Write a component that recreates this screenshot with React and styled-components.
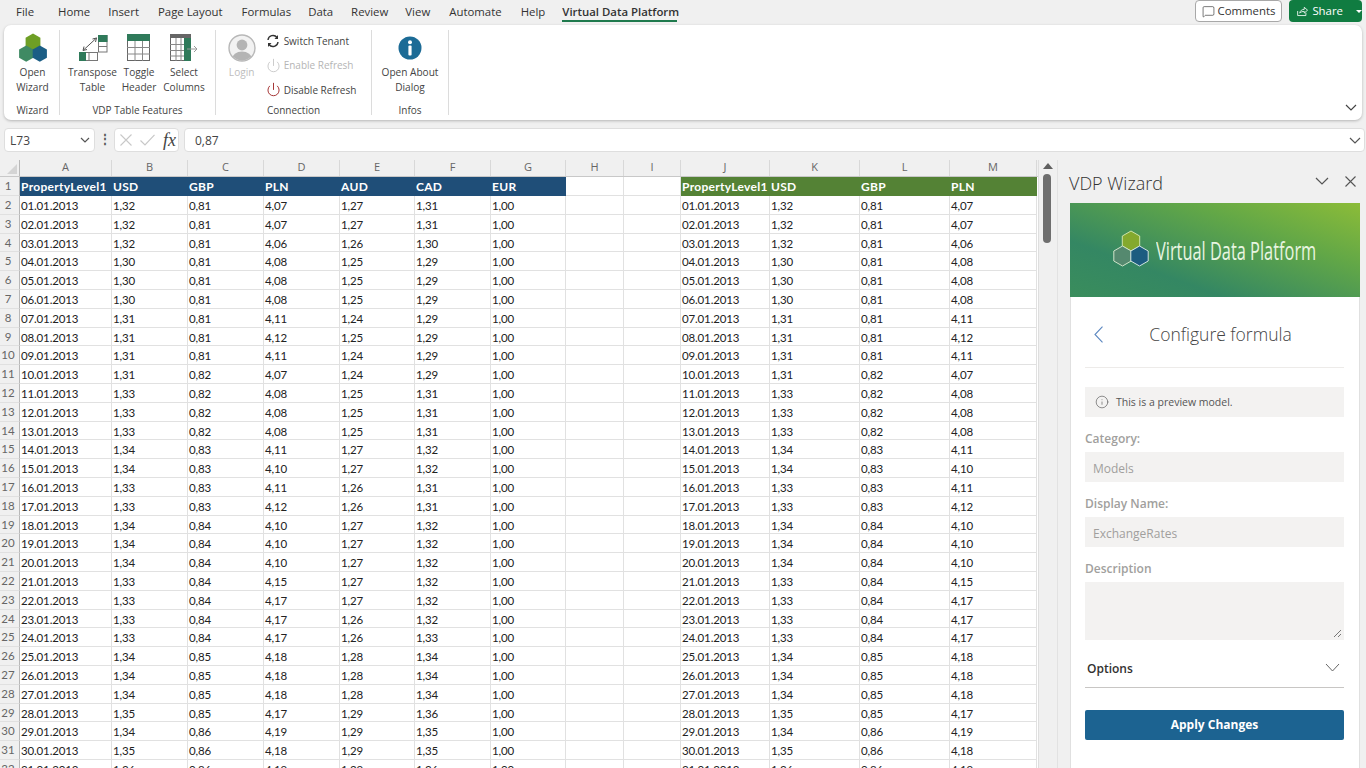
import React from 'react';
import styled, { createGlobalStyle } from 'styled-components';
import { Info, Power, MessageSquare } from 'lucide-react';

const UI_FONT = '"Open Sans","Noto Sans",sans-serif';
const CELL_FONT = 'Lato,"Open Sans",sans-serif';

const Global = createGlobalStyle`
  html,body{margin:0;padding:0;height:768px;overflow:hidden;background:#f0f0f0;}
  #root{height:768px;overflow:hidden;}
  *{box-sizing:border-box;}
`;

const tabs = [
  ['File', 16], ['Home', 24], ['Insert', 18], ['Page Layout', 19], ['Formulas', 19], ['Data', 17],
  ['Review', 18], ['View', 17], ['Automate', 19], ['Help', 19],
];

const raw = `1,32 0,81 4,07 1,27 1,31
1,32 0,81 4,07 1,27 1,31
1,32 0,81 4,06 1,26 1,30
1,30 0,81 4,08 1,25 1,29
1,30 0,81 4,08 1,25 1,29
1,30 0,81 4,08 1,25 1,29
1,31 0,81 4,11 1,24 1,29
1,31 0,81 4,12 1,25 1,29
1,31 0,81 4,11 1,24 1,29
1,31 0,82 4,07 1,24 1,29
1,33 0,82 4,08 1,25 1,31
1,33 0,82 4,08 1,25 1,31
1,33 0,82 4,08 1,25 1,31
1,34 0,83 4,11 1,27 1,32
1,34 0,83 4,10 1,27 1,32
1,33 0,83 4,11 1,26 1,31
1,33 0,83 4,12 1,26 1,31
1,34 0,84 4,10 1,27 1,32
1,34 0,84 4,10 1,27 1,32
1,34 0,84 4,10 1,27 1,32
1,33 0,84 4,15 1,27 1,32
1,33 0,84 4,17 1,27 1,32
1,33 0,84 4,17 1,26 1,32
1,33 0,84 4,17 1,26 1,33
1,34 0,85 4,18 1,28 1,34
1,34 0,85 4,18 1,28 1,34
1,34 0,85 4,18 1,28 1,34
1,35 0,85 4,17 1,29 1,36
1,34 0,86 4,19 1,29 1,35
1,35 0,86 4,18 1,29 1,35
1,36 0,86 4,19 1,29 1,36`.split('\n').map((l) => l.split(' '));

const dates = raw.map((_, i) => `${String(i + 1).padStart(2, '0')}.01.2013`);
const letters = ['A', 'B', 'C', 'D', 'E', 'F', 'G', 'H', 'I', 'J', 'K', 'L', 'M'];
const blueHead = ['PropertyLevel1', 'USD', 'GBP', 'PLN', 'AUD', 'CAD', 'EUR'];
const greenHead = ['PropertyLevel1', 'USD', 'GBP', 'PLN'];

const Page = styled.div`
  width:1366px;height:768px;display:flex;flex-direction:column;background:#f0f0f0;overflow:hidden;
  font-family:${UI_FONT};color:#333;
`;
const TabBar = styled.div`
  height:25px;flex:none;display:flex;align-items:flex-start;padding-top:4px;font-size:11.4px;line-height:16px;color:#333;position:relative;
`;
const Tab = styled.div`
  margin-left:${(p) => p.$gap}px;white-space:nowrap;
`;
const ActiveTab = styled.div`
  position:relative;margin-left:17px;font-weight:600;height:18px;border-bottom:2px solid #1f7a4d;white-space:nowrap;width:115px;
`;
const TabActions = styled.div`
  margin-left:auto;display:flex;gap:7px;margin-top:-4px;margin-right:4px;
`;
const CommentsBtn = styled.div`
  width:87px;height:22px;border:1px solid #a8a8a8;border-radius:4px;background:#fff;display:flex;align-items:center;justify-content:center;gap:3px;font-size:11.4px;
`;
const ShareBtn = styled.div`
  width:73px;height:22px;border-radius:4px;background:#107c41;color:#fff;display:flex;align-items:center;padding-left:7px;gap:4px;font-size:11.4px;
`;
const ShareCaret = styled.div`
  width:0;height:0;margin-left:9px;border-style:solid;border-width:3px 3px 0 3px;border-color:#fff transparent transparent transparent;
`;
const Ribbon = styled.div`
  margin:0 4px;height:95px;flex:none;background:#fff;border-radius:7px;box-shadow:0 1px 3px rgba(0,0,0,.25);display:flex;padding-top:5px;position:relative;
`;
const Group = styled.div`
  width:${(p) => p.$w}px;height:85px;border-right:1px solid #dcdcdc;display:flex;flex-direction:column;align-items:center;flex:none;padding-left:${(p) => p.$pad || 0}px;
`;
const GroupBody = styled.div`
  flex:1;display:flex;justify-content:center;gap:${(p) => p.$gap || 0}px;width:100%;
`;
const GroupLabel = styled.div`
  font-size:10px;line-height:14px;height:14px;margin-bottom:-2px;color:#444;
`;
const BigButton = styled.div`
  display:flex;flex-direction:column;align-items:center;width:${(p) => p.$w}px;font-size:10.1px;line-height:15px;text-align:center;color:${(p) => (p.$off ? '#bdbdbd' : '#444')};flex:none;white-space:nowrap;
`;
const IconSlot = styled.div`
  height:35px;display:flex;align-items:center;justify-content:center;
`;
const SmallCol = styled.div`
  display:flex;flex-direction:column;gap:3.5px;margin-right:3px;
`;
const SmallButton = styled.div`
  display:flex;align-items:center;gap:3px;height:21px;font-size:10px;color:${(p) => (p.$off ? '#b5b5b5' : '#444')};white-space:nowrap;
`;
const Collapse = styled.div`
  position:absolute;right:5px;bottom:9px;color:#444;display:flex;
`;
const FormulaRow = styled.div`
  height:24px;flex:none;margin:8px 0 0 4px;display:flex;align-items:stretch;
`;
const Field = styled.div`
  background:#fff;border:1px solid #dedede;border-radius:4px;display:flex;align-items:center;font-size:12px;color:#444;
`;
const NameBox = styled(Field)`
  width:91px;padding:0 4px 0 5px;justify-content:space-between;
`;
const Dots = styled.div`
  width:19px;text-align:center;font-weight:700;font-size:12px;line-height:21px;color:#555;
`;
const FxBox = styled(Field)`
  width:65px;gap:8px;padding-left:5px;color:#c8c8c8;
`;
const Fx = styled.span`
  font-family:"Liberation Serif",serif;font-style:italic;font-size:18px;color:#444;line-height:20px;
`;
const Input = styled(Field)`
  width:1181px;margin-left:5px;padding:0 3px 0 10px;justify-content:space-between;
`;
const Main = styled.div`
  flex:1;display:flex;margin-top:8px;min-height:0;
`;
const Sheet = styled.div`
  width:1038px;flex:none;font-family:${CELL_FONT};font-size:11.5px;letter-spacing:-.15px;color:#222;background:#fff;overflow:hidden;
`;
const COLS = '20px 92px 76px 76px 76px 75px 76px 75px 58px 57px 89px 90px 90px 87px';
const HeadRow = styled.div`
  display:grid;grid-template-columns:${COLS};height:17px;background:#f0f0f0;border-bottom:1px solid #c8c8c8;letter-spacing:0;
`;
const ColLetter = styled.div`
  text-align:center;line-height:14px;color:#666;border-right:1px solid #d8d8d8;font-family:${UI_FONT};font-size:11px;
`;
const Corner = styled.div`
  border-right:1px solid #b8b8b8;position:relative;
  &:after{content:'';position:absolute;right:2px;bottom:2px;border-style:solid;border-width:0 0 10px 10px;border-color:transparent transparent #d4d4d4 transparent;}
`;
const Row = styled.div`
  display:grid;grid-template-columns:${COLS};grid-template-rows:minmax(0,1fr);height:${(p) => (p.$first ? 19 : 18.8)}px;
`;
const RowNo = styled.div`
  background:#f0f0f0;color:#666;border-right:1px solid #b8b8b8;border-bottom:1px solid #e0e0e0;text-align:center;padding-right:3px;font-size:11.5px;letter-spacing:0;line-height:18px;overflow:hidden;
`;
const Cell = styled.div`
  border-right:1px solid ${(p) => (p.$fill ? p.$fill : '#e1e1e1')};border-bottom:1px solid ${(p) => (p.$fill ? p.$fill : '#e1e1e1')};padding:1px 0 0 1px;line-height:18px;white-space:nowrap;overflow:hidden;
  background:${(p) => p.$fill || '#fff'};color:${(p) => (p.$fill ? '#fff' : '#222')};
  font-weight:${(p) => (p.$fill ? 700 : 400)};font-size:${(p) => (p.$fill ? '12px' : 'inherit')};letter-spacing:${(p) => (p.$fill ? '.3px' : 'inherit')};
`;
const Scrollbar = styled.div`
  width:19px;flex:none;background:#f0f0f0;border-left:1px solid #dedede;position:relative;
`;
const ScrollUp = styled.div`
  position:absolute;top:3px;left:4px;border-style:solid;border-width:0 5px 6px 5px;border-color:transparent transparent #606060 transparent;
`;
const ScrollThumb = styled.div`
  position:absolute;top:14px;left:4px;width:8px;height:69px;border-radius:4px;background:#6e6e6e;
`;
const Pane = styled.div`
  flex:1;border-left:1px solid #e2e2e2;padding-left:12px;display:flex;flex-direction:column;
`;
const PaneHead = styled.div`
  height:43px;display:flex;align-items:flex-start;flex:none;padding-top:10px;font-size:18px;font-weight:300;line-height:26px;color:#333;
`;
const PaneTitle = styled.div`flex:1;margin-left:-1px;`;
const PaneIcons = styled.div`
  display:flex;gap:16px;align-items:center;height:22px;margin-right:10px;color:#555;
`;
const AddIn = styled.div`
  width:290px;flex:1;display:flex;flex-direction:column;
`;
const Banner = styled.div`
  height:94px;flex:none;background:linear-gradient(200deg,#8cbc38 0%,#62a747 32%,#348763 72%,#3a8d5c 100%);display:flex;align-items:center;justify-content:center;
`;
const BannerInner = styled.div`
  display:flex;align-items:center;gap:6px;margin-right:2px;
`;
const BannerText = styled.span`
  font-family:"Open Sans",sans-serif;font-size:25px;color:#e8f5e0;display:inline-block;width:160px;white-space:nowrap;
  transform:scaleX(.655);transform-origin:left center;
`;
const Form = styled.div`
  flex:1;padding:0 15px 0 14px;background:#fff;border-left:1px solid #e0e0e0;border-right:1px solid #e0e0e0;
`;
const ConfigHead = styled.div`
  height:71px;display:flex;align-items:center;border-bottom:1px solid #edebe9;padding:4px 0 0 9px;
`;
const ConfigTitle = styled.div`
  flex:1;text-align:center;font-size:17.5px;font-weight:300;color:#444;margin-right:7px;
`;
const Notice = styled.div`
  height:30px;margin-top:19px;background:#f3f2f1;display:flex;align-items:center;gap:7px;padding-left:10px;font-size:10.5px;color:#555;
`;
const Label = styled.div`
  font-size:12px;font-weight:600;color:#a19f9d;line-height:16px;margin-top:${(p) => p.$top}px;margin-bottom:5px;
`;
const ReadOnly = styled.div`
  height:30px;background:#f3f2f1;color:#a19f9d;font-size:12px;line-height:33px;padding-left:8px;
`;
const TextArea = styled.div`
  height:58px;background:#f3f2f1;position:relative;
`;
const Grip = styled.svg`
  position:absolute;right:2px;bottom:2px;
`;
const Options = styled.div`
  margin-top:18px;height:30px;border-bottom:1px solid #c8c6c4;display:flex;justify-content:space-between;align-items:flex-start;padding:2px 4px 0 2px;font-size:12px;font-weight:600;color:#323130;line-height:18px;
`;
const OptionsCaret = styled.span`
  display:flex;margin-top:3px;color:#666;
`;
const Apply = styled.div`
  margin-top:22px;height:30px;background:#1c6391;border-radius:2px;color:#fff;font-size:12px;font-weight:700;text-align:center;line-height:30px;
`;

const Chevron = ({ w = 10, h = 5, color = 'currentColor', sw = 1.2 }) => (
  <svg width={w + 2} height={h + 2} viewBox={`0 0 ${w + 2} ${h + 2}`} fill="none" stroke={color} strokeWidth={sw}>
    <path d={`M1 1L${1 + w / 2} ${1 + h}L${1 + w} 1`} />
  </svg>
);

const Cross = ({ size, color = 'currentColor', sw = 1.1 }) => (
  <svg width={size} height={size} viewBox={`0 0 ${size} ${size}`} fill="none" stroke={color} strokeWidth={sw}>
    <path d={`M.5 .5L${size - .5} ${size - .5}M${size - .5} .5L.5 ${size - .5}`} />
  </svg>
);

const Tick = () => (
  <svg width="15" height="12" viewBox="0 0 15 12" fill="none" stroke="#c8c8c8" strokeWidth="1.2">
    <path d="M.5 6.5L5 11L14.5 .8" />
  </svg>
);

const BackIcon = () => (
  <svg width="10" height="17" viewBox="0 0 10 17" fill="none" stroke="#5b87c0" strokeWidth="1.1">
    <path d="M8.5 .7L1 8.5L8.5 16.3" />
  </svg>
);

const Hex = ({ cx, cy, r, fill, stroke }) => {
  const pts = [0, 1, 2, 3, 4, 5].map((i) => {
    const a = (Math.PI / 3) * i - Math.PI / 2;
    return `${(cx + r * Math.cos(a)).toFixed(1)},${(cy + r * Math.sin(a)).toFixed(1)}`;
  }).join(' ');
  return <polygon points={pts} fill={fill} stroke={stroke} strokeWidth={stroke ? 1 : 0} />;
};

const WizardLogo = () => (
  <svg width="30" height="30" viewBox="0 0 30 30">
    <Hex cx={15} cy={9} r={8.6} fill="#6e9f25" />
    <Hex cx={8.2} cy={20.6} r={8.2} fill="#3f8a63" />
    <Hex cx={21.8} cy={20.6} r={8.2} fill="#1b5e85" />
  </svg>
);

const BannerLogo = () => (
  <svg width="38" height="40" viewBox="0 0 38 40">
    <Hex cx={19} cy={11} r={10} fill="#84a92e" stroke="#cfe3a8" />
    <Hex cx={10.5} cy={26} r={10} fill="#55896f" stroke="#cfe3c8" />
    <Hex cx={27.5} cy={26} r={10} fill="#1c5c80" stroke="#cfe3e0" />
  </svg>
);

const TransposeIcon = () => (
  <svg width="30" height="28" viewBox="0 0 30 28">
    <g fill="#fff" stroke="#777">
      <rect x="20.5" y="1.5" width="8.5" height="16.5" />
      <rect x="1.5" y="18.5" width="18" height="8" />
      <path d="M21 12.5H29M11 19V27" />
    </g>
    <rect x="20" y="1" width="9.5" height="7" fill="#2f7a5a" />
    <rect x="1" y="18" width="7" height="9" fill="#2f7a5a" />
    <path d="M5 16.5L18.5 4M5 16.5l1-4M5 16.5l4-1M18.5 4l-4 1M18.5 4l-1 4" stroke="#555" fill="none" />
  </svg>
);

const ToggleIcon = () => (
  <svg width="24" height="28" viewBox="0 0 24 28">
    <rect x=".5" y=".5" width="22" height="26" fill="#fff" stroke="#666" />
    <rect x="0" y="0" width="23" height="7" fill="#2f7a5a" />
    <path d="M0 13.5H23M0 20H23M8 7V27M15.5 7V27" stroke="#888" fill="none" />
  </svg>
);

const SelectIcon = () => (
  <svg width="29" height="28" viewBox="0 0 29 28">
    <rect x=".5" y=".5" width="20" height="26" fill="#fff" stroke="#666" />
    <rect x="0" y="0" width="21" height="4" fill="#666" />
    <rect x="14" y="4" width="7" height="23" fill="#2f7a5a" />
    <path d="M0 10.5H14M0 16.5H14M0 22H14M6 4V27M11 4V27" stroke="#888" fill="none" />
    <path d="M17 15H27M27 15l-3-3M27 15l-3 3" stroke="#999" fill="none" />
  </svg>
);

const LoginIcon = () => (
  <svg width="28" height="28" viewBox="0 0 28 28">
    <defs><clipPath id="lc"><circle cx="14" cy="14" r="12.5" /></clipPath></defs>
    <circle cx="14" cy="14" r="13" fill="#f2f2f2" stroke="#b8b8b8" strokeWidth="1.4" />
    <g clipPath="url(#lc)" fill="#b4b4b4">
      <circle cx="14" cy="11" r="5.4" />
      <ellipse cx="14" cy="25" rx="10" ry="7.5" />
    </g>
  </svg>
);

const SwitchIcon = () => (
  <svg width="15" height="14" viewBox="0 0 15 14" fill="none" stroke="#333" strokeWidth="1.4">
    <path d="M2 6A5 5 0 0 1 11 3.5" />
    <path d="M12 8A5 5 0 0 1 3 10.5" />
    <path d="M12 1v4H8.5" fill="#333" stroke="none" />
    <path d="M2 13V9h3.5" fill="#333" stroke="none" />
  </svg>
);

const ShareIcon = () => (
  <svg width="15" height="14" viewBox="0 0 15 14" fill="none" stroke="#fff">
    <path d="M2 7v5.5h10V9" />
    <path d="M4.5 9.5C5 6.5 7.5 5 10 5V2.5L14 6l-4 3.5V7.5C8 7.5 6 8 4.5 9.5z" />
  </svg>
);

const AboutIcon = () => (
  <svg width="24" height="24" viewBox="0 0 24 24">
    <circle cx="12" cy="12" r="11.5" fill="#1c6b96" />
    <circle cx="12" cy="6.2" r="2" fill="#fff" />
    <rect x="10.4" y="9.6" width="3.2" height="10" rx="1" fill="#fff" />
  </svg>
);

export default function App() {
  return (
    <Page>
      <Global />
      <TabBar>
        {tabs.map(([t, g]) => <Tab key={t} $gap={g}>{t}</Tab>)}
        <ActiveTab>Virtual Data Platform</ActiveTab>
        <TabActions>
          <CommentsBtn><MessageSquare size={13} strokeWidth={1.2} />Comments</CommentsBtn>
          <ShareBtn><ShareIcon />Share<ShareCaret /></ShareBtn>
        </TabActions>
      </TabBar>

      <Ribbon>
        <Group $w={56} $pad={2}>
          <GroupBody>
            <BigButton $w={50}><IconSlot><WizardLogo /></IconSlot>Open<br />Wizard</BigButton>
          </GroupBody>
          <GroupLabel>Wizard</GroupLabel>
        </Group>
        <Group $w={156}>
          <GroupBody>
            <BigButton $w={55}><IconSlot><TransposeIcon /></IconSlot>Transpose<br />Table</BigButton>
            <BigButton $w={38}><IconSlot><ToggleIcon /></IconSlot>Toggle<br />Header</BigButton>
            <BigButton $w={52}><IconSlot><SelectIcon /></IconSlot>Select<br />Columns</BigButton>
          </GroupBody>
          <GroupLabel>VDP Table Features</GroupLabel>
        </Group>
        <Group $w={156}>
          <GroupBody $gap={10}>
            <BigButton $w={28} $off><IconSlot><LoginIcon /></IconSlot>Login</BigButton>
            <SmallCol>
              <SmallButton><SwitchIcon />Switch Tenant</SmallButton>
              <SmallButton $off><Power size={15} strokeWidth={1.3} color="#c0c0c0" />Enable Refresh</SmallButton>
              <SmallButton><Power size={15} strokeWidth={1.5} color="#a02a2a" />Disable Refresh</SmallButton>
            </SmallCol>
          </GroupBody>
          <GroupLabel>Connection</GroupLabel>
        </Group>
        <Group $w={77}>
          <GroupBody>
            <BigButton $w={70}><IconSlot><AboutIcon /></IconSlot>Open About<br />Dialog</BigButton>
          </GroupBody>
          <GroupLabel>Infos</GroupLabel>
        </Group>
        <Collapse><Chevron w={10} h={5} /></Collapse>
      </Ribbon>

      <FormulaRow>
        <NameBox>L73<Chevron w={8} h={4} color="#555" /></NameBox>
        <Dots>⋮</Dots>
        <FxBox><Cross size={12} color="#c8c8c8" /><Tick /><Fx>fx</Fx></FxBox>
        <Input>0,87<Chevron w={10} h={5} color="#555" /></Input>
      </FormulaRow>

      <Main>
        <Sheet>
          <HeadRow>
            <Corner />
            {letters.map((l) => <ColLetter key={l}>{l}</ColLetter>)}
          </HeadRow>
          <Row $first>
            <RowNo>1</RowNo>
            {blueHead.map((h, i) => <Cell key={i} $fill="#1f4e78">{h}</Cell>)}
            <Cell /><Cell />
            {greenHead.map((h, i) => <Cell key={i} $fill="#548235">{h}</Cell>)}
          </Row>
          {raw.map((vals, i) => (
            <Row key={i}>
              <RowNo>{i + 2}</RowNo>
              <Cell>{dates[i]}</Cell>
              {vals.map((v, j) => <Cell key={j}>{v}</Cell>)}
              <Cell>1,00</Cell>
              <Cell /><Cell />
              <Cell>{dates[i]}</Cell>
              {vals.slice(0, 3).map((v, j) => <Cell key={j}>{v}</Cell>)}
            </Row>
          ))}
        </Sheet>
        <Scrollbar><ScrollUp /><ScrollThumb /></Scrollbar>
        <Pane>
          <PaneHead>
            <PaneTitle>VDP Wizard</PaneTitle>
            <PaneIcons><Chevron w={12} h={6} /><Cross size={11} /></PaneIcons>
          </PaneHead>
          <AddIn>
            <Banner>
              <BannerInner><BannerLogo /><BannerText>Virtual Data Platform</BannerText></BannerInner>
            </Banner>
            <Form>
              <ConfigHead><BackIcon /><ConfigTitle>Configure formula</ConfigTitle></ConfigHead>
              <Notice><Info size={14} strokeWidth={1.1} />This is a preview model.</Notice>
              <Label $top={14}>Category:</Label>
              <ReadOnly>Models</ReadOnly>
              <Label $top={14}>Display Name:</Label>
              <ReadOnly>ExchangeRates</ReadOnly>
              <Label $top={14}>Description</Label>
              <TextArea>
                <Grip width="9" height="9" viewBox="0 0 9 9" fill="none" stroke="#777"><path d="M1 8L8 1M5 8L8 5" /></Grip>
              </TextArea>
              <Options>Options<OptionsCaret><Chevron w={13} h={7} sw={1} /></OptionsCaret></Options>
              <Apply>Apply Changes</Apply>
            </Form>
          </AddIn>
        </Pane>
      </Main>
    </Page>
  );
}
